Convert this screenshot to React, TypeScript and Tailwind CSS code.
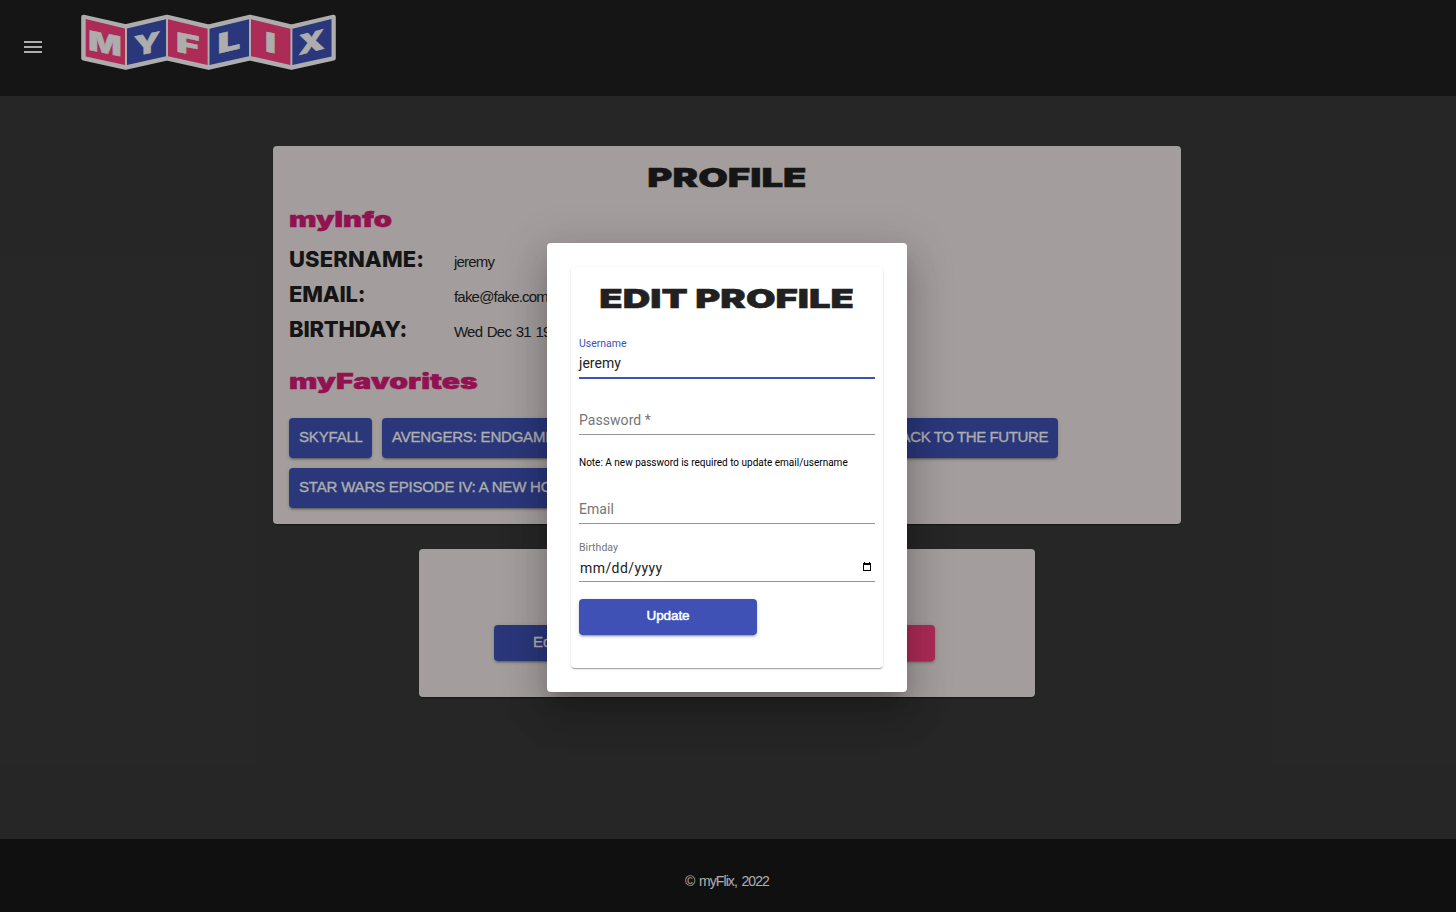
import React from "react";

const MAT_BUTTON =
  "shadow-[0_3px_1px_-2px_rgba(0,0,0,0.2),0_2px_2px_0_rgba(0,0,0,0.14),0_1px_5px_0_rgba(0,0,0,0.12)]";
const MAT_CARD =
  "shadow-[0_2px_1px_-1px_rgba(0,0,0,0.2),0_1px_1px_0_rgba(0,0,0,0.14),0_1px_3px_0_rgba(0,0,0,0.12)]";

const panels = [
  { points: "85.7,19 125,28.6 125,65 85.7,56.4", pink: true },
  { points: "127,28.6 166,19.2 166,56.2 127,65", pink: false },
  { points: "168,19.2 207.6,28.8 207.6,65 168,56.2", pink: true },
  { points: "209.5,28.8 249,19.2 249,56.2 209.5,65", pink: false },
  { points: "251,19.2 290.4,28.8 290.4,65 251,56.2", pink: true },
  { points: "292.4,28.8 331.5,19 331.5,56.4 292.4,65", pink: false },
];

const letters = [
  { ch: "M", x: 88.3, y: 49.8, w: 33.4, slope: 0.2 },
  { ch: "Y", x: 133.7, y: 56.2, w: 26.5, slope: -0.2 },
  { ch: "F", x: 176, y: 51.6, w: 23.5, slope: 0.2 },
  { ch: "L", x: 217.6, y: 53.8, w: 22.8, slope: -0.24 },
  { ch: "I", x: 265, y: 51.3, w: 11, slope: 0.2 },
  { ch: "X", x: 298.3, y: 55.2, w: 26.5, slope: -0.26 },
];

function Logo() {
  return (
    <svg width="260" height="62" viewBox="79 12 260 62" aria-label="MYFLIX">
      <path
        d="M83.5 17 L125.6 26.6 L167 17 L208.5 26.8 L250 17 L291.5 26.8 L333.5 17 V58.3 L291.5 67.6 L250 58.3 L208.5 67.6 L167 58.3 L125.6 67.6 L83.5 58.3Z"
        fill="#ffffff"
        stroke="#ffffff"
        strokeWidth="4.6"
        strokeLinejoin="round"
      />
      {panels.map((p) => (
        <polygon key={p.points} points={p.points} fill={p.pink ? "#ff4081" : "#3f51b5"} />
      ))}
      {letters.map((l) => (
        <text
          key={l.ch}
          transform={`matrix(1 ${l.slope} 0 1 ${l.x} ${l.y})`}
          textLength={l.w}
          lengthAdjust="spacingAndGlyphs"
          className="fill-white stroke-white stroke-[0.5] font-['Inter',sans-serif] text-[27px] font-black"
        >
          {l.ch}
        </text>
      ))}
    </svg>
  );
}

function InfoRow({ label, value, labelTracking }: { label: string; value: string; labelTracking: string }) {
  return (
    <div className="flex h-[35px] items-center">
      <div
        className={`w-[165px] font-['Inter',sans-serif] text-[22px] font-extrabold text-[#1f1f1f] ${labelTracking}`}
      >
        {label}
      </div>
      <div className="pt-[6px] font-['Liberation_Sans',sans-serif] text-[15px] tracking-[-0.8px] text-[#262626] [word-spacing:1.3px]">
        {value}
      </div>
    </div>
  );
}

function Movie({ title, className = "tracking-[-0.18px]" }: { title: string; className?: string }) {
  return (
    <button
      className={`h-10 rounded bg-[#3f51b5] px-[10px] pb-[2px] text-left font-['Liberation_Sans',sans-serif] text-[15px] whitespace-nowrap text-white [-webkit-text-stroke:0.3px] ${MAT_BUTTON} ${className}`}
    >
      {title}
    </button>
  );
}

export default function App() {
  return (
    <div className="relative flex h-[912px] w-full flex-col overflow-hidden bg-[#393939] font-['Roboto',sans-serif]">
      <header className="flex h-24 shrink-0 items-start bg-[#1f1f1f]">
        <svg className="mt-[35px] ml-[21px]" width="24" height="24" viewBox="0 0 24 24" fill="#ffffff">
          <path d="M3 18h18v-2H3v2zm0-5h18v-2H3v2zm0-7v2h18V6H3z" />
        </svg>
        <div className="mt-3 ml-[34px]">
          <Logo />
        </div>
      </header>

      <main className="flex grow flex-col items-center pt-[50px] pr-[2px]">
        <section className={`h-[378px] w-[908px] rounded bg-[#f1e9e7] px-4 ${MAT_CARD}`}>
          <h1 className="flex h-[57px] items-center justify-center pt-[6px] font-['Inter',sans-serif] text-[26px] font-black text-[#1f1f1f]">
            <span className="inline-block scale-x-[1.475] [-webkit-text-stroke:0.5px]">PROFILE</span>
          </h1>
          <h2 className="flex h-[39px] items-center pb-[5px] font-['Inter',sans-serif] text-[21px] font-black text-[#d71a78]">
            <span className="inline-block origin-left scale-x-[1.39] [-webkit-text-stroke:0.5px]">myInfo</span>
          </h2>
          <InfoRow label="USERNAME:" value="jeremy" labelTracking="tracking-[0.1px]" />
          <InfoRow label="EMAIL:" value="fake@fake.com" labelTracking="tracking-[-0.2px]" />
          <InfoRow label="BIRTHDAY:" value="Wed Dec 31 1969" labelTracking="tracking-[-0.2px]" />
          <h2 className="flex h-[71px] items-center pb-[1px] font-['Inter',sans-serif] text-[21px] font-black text-[#d71a78]">
            <span className="inline-block origin-left scale-x-[1.435] [-webkit-text-stroke:0.5px]">myFavorites</span>
          </h2>
          <div className="flex w-[769px] gap-[10px]">
            <Movie title="SKYFALL" className="w-[83px] tracking-[-0.18px]" />
            <Movie title="AVENGERS: ENDGAME" className="tracking-[-0.2px]" />
            <Movie title="BACK TO THE FUTURE" className="ml-auto tracking-[-0.4px]" />
          </div>
          <div className="mt-[10px] flex">
            <Movie title="STAR WARS EPISODE IV: A NEW HOPE" />
          </div>
        </section>

        <section className={`mt-[25px] flex h-[148px] w-[616px] justify-between rounded bg-[#f1e9e7] pt-[76px] pr-[100px] pl-[75px] ${MAT_CARD}`}>
          <button
            className={`h-9 w-[178px] rounded bg-[#3f51b5] pb-[2px] pl-[39px] text-left font-['Liberation_Sans',sans-serif] text-[15px] text-white [-webkit-text-stroke:0.3px] ${MAT_BUTTON}`}
          >
            Edit
          </button>
          <button className={`h-9 w-[178px] rounded bg-[#ff4081] ${MAT_BUTTON}`} aria-label="Delete" />
        </section>
      </main>

      <footer className="flex h-[73px] shrink-0 items-center justify-center bg-[#181818] pt-3 pr-[2px] font-['Liberation_Sans',sans-serif] text-[14px] tracking-[-0.9px] text-white [word-spacing:1.5px]">
        © myFlix, 2022
      </footer>

      <div className="absolute inset-0 flex items-start justify-center bg-black/[0.32] pt-[243px] pr-[2px]">
        <div className="h-[449px] w-[360px] rounded bg-white p-6 shadow-[0_11px_15px_-7px_rgba(0,0,0,0.2),0_24px_38px_3px_rgba(0,0,0,0.14),0_9px_46px_8px_rgba(0,0,0,0.12)]">
          <div className={`flex h-[401px] flex-col rounded px-2 text-[14px] tracking-[0.05px] text-[#212121] ${MAT_CARD}`}>
            <h1 className="flex h-[63px] items-center justify-center font-['Inter',sans-serif] text-[26px] font-black tracking-normal">
              <span className="inline-block scale-x-[1.47] whitespace-nowrap [-webkit-text-stroke:0.5px]">EDIT PROFILE</span>
            </h1>
            <label className="flex h-[49px] flex-col border-b-2 border-[#3f51b5] pt-[7px]">
              <span className="text-[10.5px] leading-[14px] tracking-[-0.02px] text-[#3f51b5]">Username</span>
              <span className="mt-[3px] leading-[18px]">jeremy</span>
            </label>
            <label className="mt-[32px] flex h-[24px] flex-col border-b border-[#949494] leading-[18px] text-[#757575]">
              Password *
            </label>
            <p className="mt-[21px] text-[10px] leading-[14px] tracking-normal text-black">
              Note: A new password is required to update email/username
            </p>
            <label className="mt-[30px] flex h-[24px] flex-col border-b border-[#949494] leading-[18px] text-[#757575]">
              Email
            </label>
            <label className="mt-[17px] flex h-[41px] flex-col border-b border-[#949494]">
              <span className="text-[10.5px] leading-[14px] text-[#757575]">Birthday</span>
              <span className="mt-[4px] flex justify-between pr-[3px] pl-px leading-[18px]">
                <span className="tracking-[0.42px]">mm/dd/yyyy</span>
                <svg width="10" height="12" viewBox="0 0 10 12" className="mt-[2px]">
                  <path d="M2 1h1v1H2zM7 1h1v1H7zM1 2h8v2H1z" fill="#000000" />
                  <rect x="1.5" y="2.5" width="7" height="7" fill="none" stroke="#000000" />
                </svg>
              </span>
            </label>
            <button
              className={`mt-[17px] h-9 w-[178px] rounded bg-[#3f51b5] pb-[2px] font-['Liberation_Sans',sans-serif] text-[13.5px] tracking-[-0.1px] text-white [-webkit-text-stroke:0.5px] ${MAT_BUTTON}`}
            >
              Update
            </button>
          </div>
        </div>
      </div>
    </div>
  );
}
